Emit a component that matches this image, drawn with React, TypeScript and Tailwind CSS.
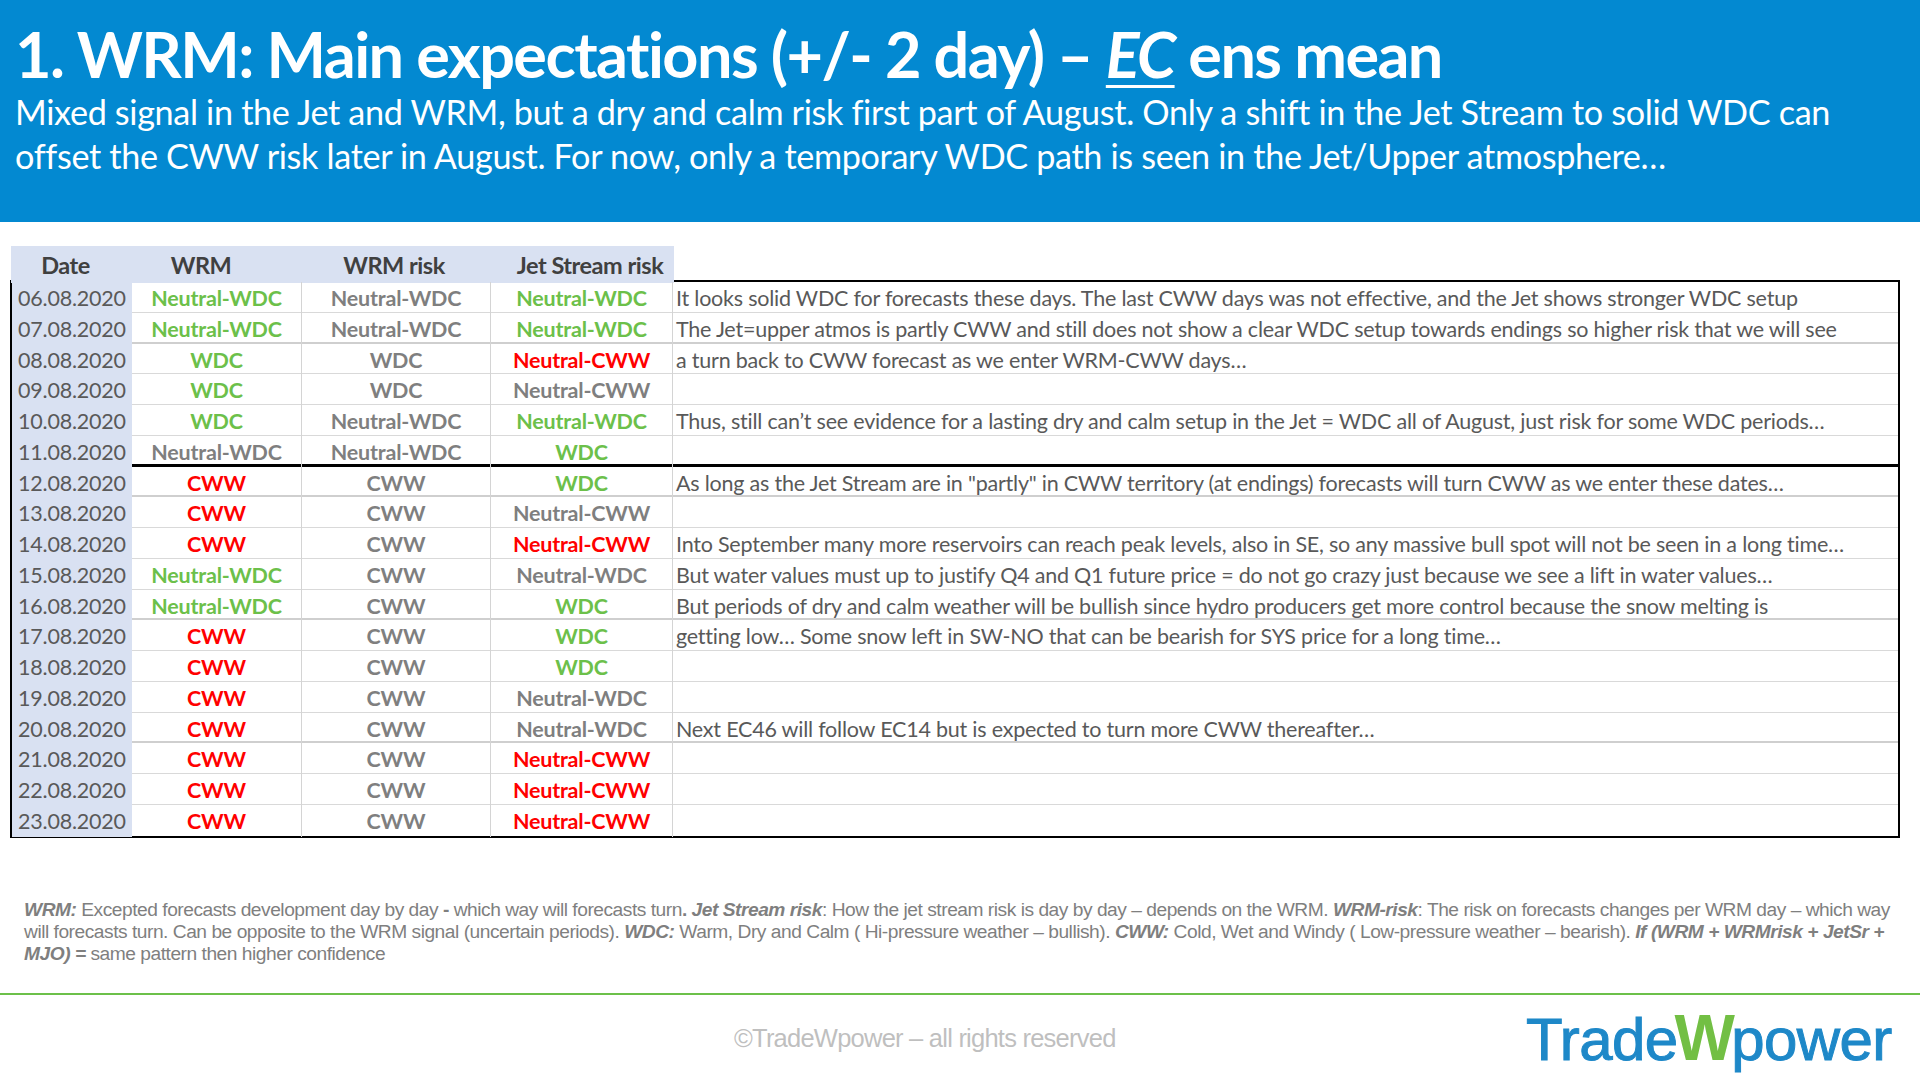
import React from 'react';

type Tone = 'green' | 'gray' | 'red';
type Cell = [string, Tone];

const toneClass: Record<Tone, string> = {
  green: 'text-[#6cc04a]',
  gray: 'text-[#7f7f7f]',
  red: 'text-[#ff0000]',
};

const NW: Cell = ['Neutral-WDC', 'green'];
const NWg: Cell = ['Neutral-WDC', 'gray'];
const NC: Cell = ['Neutral-CWW', 'red'];
const NCg: Cell = ['Neutral-CWW', 'gray'];
const W: Cell = ['WDC', 'green'];
const Wg: Cell = ['WDC', 'gray'];
const C: Cell = ['CWW', 'red'];
const Cg: Cell = ['CWW', 'gray'];

type Row = { date: string; wrm: Cell; risk: Cell; jet: Cell; note: string };

const rows: Row[] = [
  { date: '06.08.2020', wrm: NW, risk: NWg, jet: NW, note: 'It looks solid WDC for forecasts these days. The last CWW days was not effective, and the Jet shows stronger WDC setup' },
  { date: '07.08.2020', wrm: NW, risk: NWg, jet: NW, note: 'The Jet=upper atmos is partly CWW and still does not show a clear WDC setup towards endings so higher risk that we will see' },
  { date: '08.08.2020', wrm: W, risk: Wg, jet: NC, note: 'a turn back to CWW forecast as we enter WRM-CWW days…' },
  { date: '09.08.2020', wrm: W, risk: Wg, jet: NCg, note: '' },
  { date: '10.08.2020', wrm: W, risk: NWg, jet: NW, note: 'Thus, still can’t see evidence for a lasting dry and calm setup in the Jet = WDC all of August, just risk for some WDC periods…' },
  { date: '11.08.2020', wrm: NWg, risk: NWg, jet: W, note: '' },
  { date: '12.08.2020', wrm: C, risk: Cg, jet: W, note: 'As long as the Jet Stream are in "partly" in CWW territory (at endings) forecasts will turn CWW as we enter these dates…' },
  { date: '13.08.2020', wrm: C, risk: Cg, jet: NCg, note: '' },
  { date: '14.08.2020', wrm: C, risk: Cg, jet: NC, note: 'Into September many more reservoirs can reach peak levels, also in SE, so any massive bull spot will not be seen in a long time…' },
  { date: '15.08.2020', wrm: NW, risk: Cg, jet: NWg, note: 'But water values must up to justify Q4 and Q1 future price = do not go crazy just because we see a lift in water values…' },
  { date: '16.08.2020', wrm: NW, risk: Cg, jet: W, note: 'But periods of dry and calm weather will be bullish since hydro producers get more control because the snow melting is' },
  { date: '17.08.2020', wrm: C, risk: Cg, jet: W, note: 'getting low… Some snow left in SW-NO that can be bearish for SYS price for a long time…' },
  { date: '18.08.2020', wrm: C, risk: Cg, jet: W, note: '' },
  { date: '19.08.2020', wrm: C, risk: Cg, jet: NWg, note: '' },
  { date: '20.08.2020', wrm: C, risk: Cg, jet: NWg, note: 'Next EC46 will follow EC14 but is expected to turn more CWW thereafter…' },
  { date: '21.08.2020', wrm: C, risk: Cg, jet: NC, note: '' },
  { date: '22.08.2020', wrm: C, risk: Cg, jet: NC, note: '' },
  { date: '23.08.2020', wrm: C, risk: Cg, jet: NC, note: '' },
];

// separators under these rows are drawn heavier
const blackAfter = 5;
const thickAfter = [1, 6, 10, 14];

function ValueCell({ cell }: { cell: Cell }) {
  return (
    <div className={`flex items-center justify-center border-r border-[#d4d4d4] font-bold ${toneClass[cell[1]]}`}>
      {cell[0]}
    </div>
  );
}

export default function App() {
  return (
    <div className="w-[1920px] h-[1080px] bg-white overflow-hidden font-['Lato','Open_Sans',sans-serif] flex flex-col">
      <header className="h-[222px] bg-[#0389d1] text-white pl-[15px] pt-[22px]">
        <h1 className="text-[63px] leading-[64px] font-bold tracking-[-0.025em]">
          1. WRM: Main expectations (+/- 2 day) – <span className="italic underline decoration-[3px] underline-offset-[7px]">EC</span> ens mean
        </h1>
        <p className="mt-[4px] text-[34.2px] leading-[44px] tracking-[-0.01em] whitespace-nowrap">
          Mixed signal in the Jet and WRM, but a dry and calm risk first part of August. Only a shift in the Jet Stream to solid WDC can
          <br />
          offset the CWW risk later in August. For now, only a temporary WDC path is seen in the Jet/Upper atmosphere…
        </p>
      </header>

      <section className="mt-[24px] ml-[10px] w-[1890px] text-[21.5px] tracking-[-0.01em]">
        <div className="grid grid-cols-[109px_162px_224px_168px_1fr] h-[34px] pl-px">
          {['Date', 'WRM', 'WRM risk', 'Jet Stream risk'].map((h) => (
            <div key={h} className="bg-[#d9e1f2] flex items-center justify-center font-bold text-[#404040] text-[23.5px] tracking-[-0.02em] pt-[2px]">
              {h}
            </div>
          ))}
          <div />
        </div>
        <div className="border-2 border-black">
          {rows.map((r, i) => {
            const sep =
              i === rows.length - 1
                ? ''
                : i === blackAfter
                  ? 'border-b-[3px] border-black'
                  : thickAfter.includes(i)
                    ? 'border-b-2 border-[#cfcfcf]'
                    : 'border-b border-[#d9d9d9]';
            return (
              <div key={r.date} className={`grid grid-cols-[120px_170px_189px_182px_1fr] h-[30.75px] ${sep}`}>
                <div className="bg-[#d9e1f2] flex items-center justify-center text-[#595959] text-[21.5px]">{r.date}</div>
                <ValueCell cell={r.wrm} />
                <ValueCell cell={r.risk} />
                <ValueCell cell={r.jet} />
                <div className="flex items-center pl-[3px] text-[#595959] whitespace-nowrap overflow-hidden">{r.note}</div>
              </div>
            );
          })}
        </div>
      </section>

      <p className="mt-[61px] mx-[24px] text-[19.2px] leading-[22px] text-[#7f7f7f] font-['Liberation_Sans',Arial,sans-serif] tracking-[-0.025em]">
        <b className="italic">WRM:</b> Excepted forecasts development day by day <b>-</b> which way will forecasts turn<b>.</b>{'  '}
        <b className="italic">Jet Stream risk</b>: How the jet stream risk is day by day – depends on the WRM. <b className="italic">WRM-risk</b>: The risk on forecasts changes per WRM day – which way will forecasts turn. Can be opposite to the WRM signal (uncertain periods). <b className="italic">WDC:</b> Warm, Dry and Calm ( Hi-pressure weather – bullish). <b className="italic">CWW:</b> Cold, Wet and Windy ( Low-pressure weather – bearish). <b className="italic">If (WRM + WRMrisk + JetSr + MJO) =</b> same pattern then higher confidence
      </p>

      <div className="mt-[28px] h-[2px] bg-[#6cc04a]" />

      <footer className="flex items-center h-[84px]">
        <div className="pl-[734px] pt-[4px] w-[1526px] text-[25.5px] text-[#bfbfbf] font-['Liberation_Sans',Arial,sans-serif] tracking-[-0.03em]">
          ©TradeWpower – all rights reserved
        </div>
        <div className="flex items-baseline text-[60px] leading-none text-[#1e88c8] font-['Liberation_Sans',Arial,sans-serif] tracking-[-0.01em] pt-[2px] [-webkit-text-stroke:1px_#1e88c8]">
          <span>Trade</span>
          <span className="text-[#72bf44] font-bold text-[64px] -mx-[3px] [-webkit-text-stroke:0px]">W</span>
          <span>power</span>
        </div>
      </footer>
    </div>
  );
}
